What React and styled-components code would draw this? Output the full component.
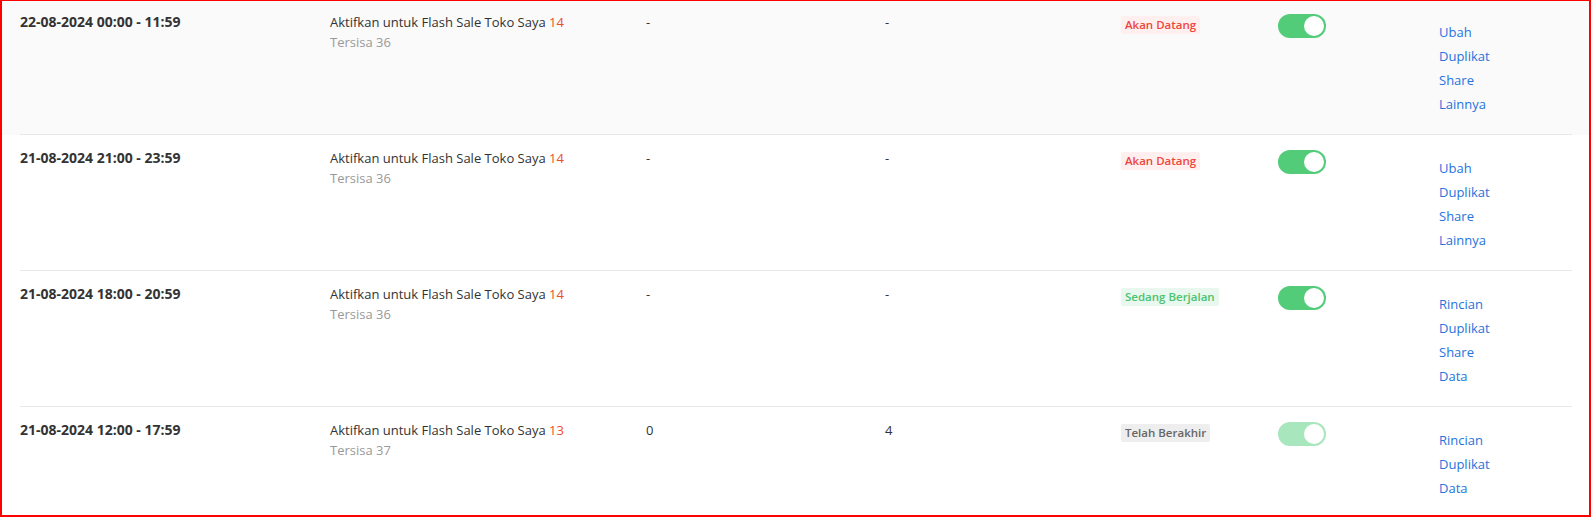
import React from 'react'
import styled, { createGlobalStyle } from 'styled-components'

const GlobalStyle = createGlobalStyle`
body {
  margin: 0;
  background: #fff;
  font-family: "Open Sans", "Noto Sans", Arial, sans-serif;
  color: #333;
}
`

const Frame = styled.div`
box-sizing: border-box;
width: 1591px;
height: 517px;
border: 2px solid #ff0000;
border-top-width: 1px;
overflow: hidden;
`

const Table = styled.div`
margin-top: -2px;
`

const Row = styled.div`
background: ${(p) => (p.$active ? '#fafafa' : '#fff')};
`

const RowInner = styled.div`
display: grid;
grid-template-columns: 310px 316px 239px 236px 157px 161px 1fr;
margin: 0 17px 0 18px;
height: 135px;
border-bottom: 1px solid #e8e8e8;
`

const Cell = styled.div`
padding-top: 13px;
font-size: 13px;
line-height: 20px;
`

const DateText = styled.div`
font-size: 14px;
font-weight: 700;
color: #333;
`

const Name = styled.div`
color: #333;
`

const Count = styled.span`
color: #ee4d2d;
`

const Remain = styled.div`
color: #999;
`

const Badge = styled.span`
display: inline-block;
margin-top: 4px;
padding: 0 4px;
height: 18px;
line-height: 18px;
font-size: 11.5px;
font-weight: 600;
border-radius: 2px;
color: ${(p) => p.$fg};
background: ${(p) => p.$bg};
`

const Toggle = styled.div`
margin-top: 2px;
width: 48px;
height: 24px;
border-radius: 12px;
background: ${(p) => (p.$disabled ? '#a8e6bd' : '#52cc78')};
display: flex;
align-items: center;
justify-content: flex-end;
padding: 0 2px;
box-sizing: border-box;
`

const Knob = styled.div`
width: 20px;
height: 20px;
border-radius: 50%;
background: #fff;
`

const Links = styled.div`
padding-top: 21px;
display: flex;
flex-direction: column;
`

const LinkText = styled.a`
font-size: 13px;
line-height: 24px;
color: #2673dd;
text-decoration: none;
cursor: pointer;
`

const statuses = {
  upcoming: { label: 'Akan Datang', fg: '#f0453a', bg: '#fff0ef' },
  ongoing: { label: 'Sedang Berjalan', fg: '#4cc36e', bg: '#e8f8ee' },
  ended: { label: 'Telah Berakhir', fg: '#666', bg: '#eeeeee' },
}

const rows = [
  { date: '22-08-2024 00:00 - 11:59', count: 14, left: 36, a: '-', b: '-', status: 'upcoming', links: ['Ubah', 'Duplikat', 'Share', 'Lainnya'], active: true },
  { date: '21-08-2024 21:00 - 23:59', count: 14, left: 36, a: '-', b: '-', status: 'upcoming', links: ['Ubah', 'Duplikat', 'Share', 'Lainnya'] },
  { date: '21-08-2024 18:00 - 20:59', count: 14, left: 36, a: '-', b: '-', status: 'ongoing', links: ['Rincian', 'Duplikat', 'Share', 'Data'] },
  { date: '21-08-2024 12:00 - 17:59', count: 13, left: 37, a: '0', b: '4', status: 'ended', links: ['Rincian', 'Duplikat', 'Data'] },
]

const App = () => {
  return (
    <Frame>
      <GlobalStyle />
      <Table>
        {rows.map((r, i) => {
          const s = statuses[r.status]
          return (
            <Row key={i} $active={r.active}>
              <RowInner>
                <Cell>
                  <DateText>{r.date}</DateText>
                </Cell>
                <Cell>
                  <Name>
                    Aktifkan untuk Flash Sale Toko Saya <Count>{r.count}</Count>
                  </Name>
                  <Remain>Tersisa {r.left}</Remain>
                </Cell>
                <Cell>{r.a}</Cell>
                <Cell>{r.b}</Cell>
                <Cell>
                  <Badge $fg={s.fg} $bg={s.bg}>{s.label}</Badge>
                </Cell>
                <Cell>
                  <Toggle $disabled={r.status === 'ended'}>
                    <Knob />
                  </Toggle>
                </Cell>
                <Links>
                  {r.links.map((l) => (
                    <LinkText key={l}>{l}</LinkText>
                  ))}
                </Links>
              </RowInner>
            </Row>
          )
        })}
      </Table>
    </Frame>
  )
}

export default App
